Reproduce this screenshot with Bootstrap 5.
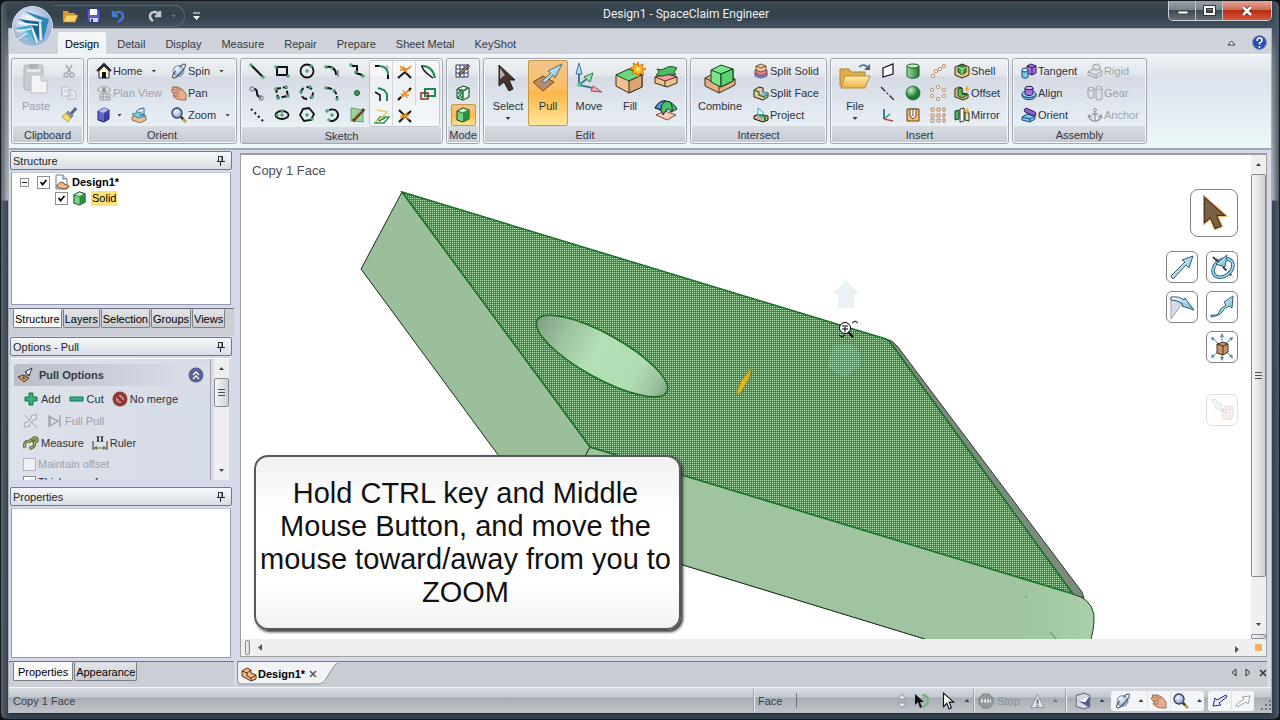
<!DOCTYPE html>
<html lang="en">
<head>
<meta charset="utf-8">
<meta name="viewport" content="width=device-width, initial-scale=1">
<title>Design1 - SpaceClaim Engineer</title>
<link href="https://cdn.jsdelivr.net/npm/bootstrap@5.3.0/dist/css/bootstrap.min.css" rel="stylesheet">
<script src="https://cdn.jsdelivr.net/npm/bootstrap@5.3.0/dist/js/bootstrap.bundle.min.js"></script>
<style>
body{font:11px/14px "Liberation Sans",Arial,sans-serif;color:#2b323c;background:#101418}
button{border:0;background:none;padding:0;color:inherit;font:inherit;flex-shrink:0}
svg{display:block;flex-shrink:0}
.ic{width:16px;height:16px}
.big{width:32px;height:32px}
.win{padding:0 7px 5px;min-height:100vh;height:100vh;border:1px solid #14191e;border-radius:7px;
 background:linear-gradient(90deg,#59636b,transparent 7px,transparent calc(100% - 7px),#4b5868) ,linear-gradient(#3b4852 0,#33414c 14px,#465663 29px,#7d8488 60px,#b4b8bc 199px,#39434f 200px,#333f4c)}
.titlebar{height:27px;color:#eef2f5;font:12px/14px Roboto,sans-serif}
.qat{height:22px;margin-left:46px;border:1px solid #59656f;border-left:0;border-radius:0 12px 12px 0;padding:0 8px 0 8px}
.orb{left:11px;top:5px;width:41px;height:41px;z-index:5}
.wbtns{border:1px solid #cdd3d8;border-top:0;border-radius:0 0 5px 5px;overflow:hidden;height:20px}
.wbtns button{width:27px;background:linear-gradient(#9aa2a8 0,#76828b 48%,#3d4852 50%,#667079);border-right:1px solid #c0c6cb}
.wbtns .closer{width:48px;border:0;background:linear-gradient(#e3a79b 0,#cf6a56 48%,#b52c14 50%,#d8573a)}
.inner{background:#d5d9ea;border:1px solid #aab0b8;border-bottom-color:#20262c;min-height:0}
.menus{height:25px;background:#cfd3dc;padding-left:49px}
.menus .nav-link{font-size:11px;line-height:14px;padding:4px 10px 4px;color:#333a43;border-radius:3px 3px 0 0;border:1px solid transparent;border-bottom:0;margin-right:-2px}
.menus .nav-link.active{background:linear-gradient(#f4f7fa,#e9f2f5);padding:4px 6px 4px;border-color:#f6fafc;margin-right:0}
.ribbon{background:linear-gradient(#eef2f6,#dde3ec 24%,#e3ecf3 60%,#edf8fa);padding:3px 2px 4px;gap:3px;border-bottom:2px solid #a2a7b0;border-top:1px solid #f7f9fb}
.grp{border:1px solid #a1a6af;border-radius:3px;box-shadow:inset 0 0 0 1px #f5f8fb;background:linear-gradient(#eef1f4 0,#e2e6ec 17px,#d5dae4 18px,#e9f1f6 70px);height:86px;display:flex;flex-direction:column;flex-shrink:0}
.grp>.gbody{height:68px;padding-top:1px;display:flex}
.grp>.glabel{text-align:center;line-height:14px;height:16px;padding-top:2px;margin:0 1px 1px;background:linear-gradient(#d7dbe2,#c6cbd3);color:#30363f}
.col-b{display:flex;flex-direction:column}
.rb{height:22px;display:flex;align-items:center;gap:1px;white-space:nowrap}
.off{color:#9da1a8}
.tile{width:40px;height:66px;display:flex;flex-direction:column;align-items:center;padding-top:2px;line-height:14px}
.tile .big{margin-bottom:5px}
.tile.hot{padding-top:1px}
.caret{width:5px;height:3px;background:#3c424a;clip-path:polygon(0 0,100% 0,50% 100%);flex-shrink:0}
.caret.up{clip-path:polygon(0 100%,100% 100%,50% 0)}
.hot{background:linear-gradient(#f3c38b,#fbbf62 45%,#ffb444 48%,#ffe79a);border:1px solid #c39a4c;border-radius:2px}
.cells{display:grid;grid-auto-flow:column;grid-template-rows:repeat(3,22px);grid-auto-columns:25px}
.cells button{display:flex;align-items:center;justify-content:center}
.trim{border:1px solid #c3c7cd;border-radius:3px;background:rgba(255,255,255,.55);grid-auto-columns:23px}
.trim button:nth-child(n+4){box-shadow:-1px 0 #d3d7dd}
.side{width:225px;padding:0 2px 0 1px;margin-right:6px;min-height:0}
.phead{height:19px;border:1px solid #6f7a90;border-radius:2px;background:linear-gradient(#f6f8fa,#d9dee6);padding:0 5px 0 2px;color:#20252c;flex-shrink:0;margin:1px 0 2px;font-weight:400}
.pbox{background:#fff;border:1px solid #8f98ac;border-top-color:#c3c9d8;margin:0 1px}
.tabs{background:#cbced5;border-top:1px solid #6d7380;gap:1px;padding-left:4px;flex-shrink:0;margin:3px -2px 0 -1px;color:#000}
.tabs button{border:1px solid #7b8088;border-top-color:#d9dce0;background:linear-gradient(#e2e4e7,#c9cbd0);padding:0 1px;height:19px;line-height:16px;border-radius:0 0 2px 2px;color:#000}
.tabs button.active{background:#fbfbfc;border-top-color:#fbfbfc}
.form-check-input[type=checkbox]{width:13px;height:13px;border-radius:0;margin:0;border:1px solid #8b8f95;background-color:#fff;flex-shrink:0}
.form-check-input:checked[type=checkbox]{background-image:url("data:image/svg+xml,%3Csvg xmlns='http://www.w3.org/2000/svg' viewBox='0 0 13 13'%3E%3Cpath d='M3 6l2.500 3 4.500-5.500' fill='none' stroke='%23000' stroke-width='2'/%3E%3C/svg%3E")}
.opts{height:122px;overflow:hidden;background:linear-gradient(90deg,#dde1e9,#d5dbe8);margin:0 1px;padding-right:2px;border-top:1px solid #fff}
.opts .ohead{background:linear-gradient(90deg,#b9bec8,#dde0ea);height:22px;border-radius:4px 4px 0 0;margin:5px 0 2px 3px;padding:0 6px 0 3px}
.opts .rb{padding-left:12px;gap:2px}
.opts .obody{border-right:1px solid #9ca2ae;margin-right:3px}
.sbar{background:#efeff0;width:15px}
.thumb{border:1px solid #878b90;border-radius:2px;background:linear-gradient(90deg,#f7f7f8,#cfd0d4);display:flex;align-items:center;justify-content:center}
.gripv{width:7px;height:8px;background:repeating-linear-gradient(#4c5056 0,#4c5056 1px,transparent 1px,transparent 3px)}
.view{border:1px solid #9d9f98;border-width:2px 1px 1px;background:#fff;min-height:0;min-width:0}
.prompt{left:11px;top:8px;font-size:13px;line-height:16px;color:#4c4f52}
.hint{left:13px;bottom:9px;width:427px;border:2px solid #55585c;border-radius:14px;background:linear-gradient(#f0f0f1,#fff 30%,#fff 75%,#f1f1f2);box-shadow:2px 2px 3px #333;font-size:29px;line-height:33px;color:#111;text-align:center;padding:20px 4px 19px 0}
.tools{right:13px;top:34px;display:grid;grid-template-columns:32px 32px;gap:8px;justify-items:end}
.tools button{width:32px;height:32px;border:1px solid #7f8388;border-radius:6px;background:#fff;display:flex;align-items:center;justify-content:center}
.tools .pick{width:48px;height:48px;grid-column:1/3;margin-bottom:6px;border-radius:8px}
.tools svg{width:28px;height:28px}
.doctabs{background:#c8ccd3;border-top:1px solid #737987;height:26px;color:#000;margin-left:-3px}
.doctab{width:100px;height:23px}
.doctab span{font-weight:700}
.status{height:26px;background:linear-gradient(#d9dce2,#c3c7ce 35%,#a9aeb6 40%,#c0c4ca);border-top:1px solid #f2f4f6;color:#3b4149}
.status button{height:22px;display:flex;align-items:center;justify-content:center}
.sep{width:2px;height:24px;border-left:1px solid #9a9fa7;border-right:1px solid #e9ebee}
.wgrp{background:#f3f5f8;border-radius:3px;height:20px;display:flex;align-items:center}
</style>
</head>
<body>
<svg width="0" height="0" class="position-absolute" aria-hidden="true">
<defs>
<linearGradient id="gB" x1="0" y1="0" x2="1" y2="1"><stop offset="0" stop-color="#fff"/><stop offset="1" stop-color="#5db4d0"/></linearGradient>
<linearGradient id="gY" x1="0" y1="0" x2="0" y2="1"><stop offset="0" stop-color="#fff0b0"/><stop offset="1" stop-color="#e8b040"/></linearGradient>
<linearGradient id="gC" x1="0" x2="1"><stop offset="0" stop-color="#9fdca4"/><stop offset="1" stop-color="#237a35"/></linearGradient>
<radialGradient id="gS" cx=".35" cy=".3"><stop offset="0" stop-color="#c8f0c8"/><stop offset="1" stop-color="#1d7a34"/></radialGradient>
<radialGradient id="gL" cx=".4" cy=".35"><stop offset="0" stop-color="#f4f8ff"/><stop offset="1" stop-color="#9fb5d8"/></radialGradient>
</defs>
<symbol id="folder" viewBox="0 0 16 16"><path d="M1 3h5l1 2h6v3H4l-3 6z" fill="#d89a28"/><path d="M4 7h12l-3 7H1z" fill="#f7cf63" stroke="#b97f1c" stroke-width=".6"/></symbol>
<symbol id="save" viewBox="0 0 16 16"><path d="M1 1h13v13H3l-2-2z" fill="#5c5ac8" stroke="#2c2c8a"/><path d="M4 1h7v6H4z" fill="#fff"/><path d="M4 10h8v4H4z" fill="#d4d6ea"/><path d="M5 11h2v3H5z" fill="#30308e"/></symbol>
<symbol id="undo" viewBox="0 0 16 16"><path d="M3 3v5h5M4 7c3-5 9-3 9 1 0 3-3 5-5 6" fill="none" stroke="#4179d6" stroke-width="2.500"/></symbol>
<symbol id="redo" viewBox="0 0 16 16"><path d="M13 3v5H8M12 7C9 2 3 4 3 8c0 2 1 4 3 5" fill="none" stroke="#c3cad1" stroke-width="2.500"/></symbol>
<symbol id="cut" viewBox="0 0 16 16"><path d="M5 2l5 8M11 2L6 10" stroke="#a9adb4" stroke-width="1.500"/><circle cx="5" cy="12" r="2" fill="none" stroke="#a9adb4" stroke-width="1.500"/><circle cx="11" cy="12" r="2" fill="none" stroke="#a9adb4" stroke-width="1.500"/></symbol>
<symbol id="copy" viewBox="0 0 16 16"><path d="M1 2h6l2 2v7H1zM7 5h5l3 3v6H7z" fill="#edeff2" stroke="#b4b8be"/><path d="M3 5h3M3 7h3M9 9h3M9 11h4" stroke="#c2c5ca"/></symbol>
<symbol id="brush" viewBox="0 0 16 16"><path d="M15 1l-5 6" stroke="#5c6488" stroke-width="3"/><path d="M7 4l5 5-2 2-5-4z" fill="#8e93aa" stroke="#4b4f6c" stroke-width=".6"/><path d="M5 6l5 5-3 4-6-5z" fill="#f3dd66" stroke="#99812a" stroke-width=".7"/></symbol>
<symbol id="paste" viewBox="0 0 32 32"><rect x="4" y="3" width="19" height="25" rx="2" fill="#c9ccd1" stroke="#b0b3b8"/><path d="M9 2h9v5H9z" fill="#b1b4b9"/><path d="M7 7h13v3H7z" fill="#e5e7e9"/><path d="M11 13h10l6 6v12H11z" fill="#f3f4f6" stroke="#bcc0c5"/><path d="M21 13v6h6" fill="#dcdee2" stroke="#bcc0c5"/></symbol>
<symbol id="home" viewBox="0 0 16 16"><path d="M3 8v7h10V8L8 3z" fill="#fff7cf" stroke="#2d2a3a"/><path d="M1 8l7-7 7 7" fill="none" stroke="#1c1c30" stroke-width="2"/><path d="M6 9h4v6H6z" fill="#111"/></symbol>
<symbol id="plan" viewBox="0 0 16 16"><path d="M1 5q7-7 14 0-7 5-14 0z" fill="#dfe1e4" stroke="#999da3"/><circle cx="8" cy="5" r="2" fill="#888c93"/><path d="M4 9h10v6H4zM4 12h10M7 9v6M11 9v6" fill="none" stroke="#999da3"/></symbol>
<symbol id="bcube" viewBox="0 0 16 16"><path d="M2 4l6-3 5 2v9l-5 3-6-2z" fill="#6167c4" stroke="#1d1f5a"/><path d="M2 4l6-3 5 2-5 3z" fill="#b6baf0"/><path d="M8 6l5-3v9l-5 3z" fill="#3b3f9c"/></symbol>
<symbol id="turn" viewBox="0 0 16 16"><path d="M1 10l5-2 9 2v3l-6 3-8-3z" fill="#e9bf98" stroke="#7b5432" stroke-width=".8"/><path d="M1 7l8-2 6 4-8 2z" fill="#7fd2e6" stroke="#28708c" stroke-width=".8"/><path d="M8 2l5-1v7H8M8 2L5 5" fill="none" stroke="#29659a"/></symbol>
<symbol id="spin" viewBox="0 0 16 16"><circle cx="7.500" cy="8" r="5.500" fill="url(#gL)" stroke="#8795b5"/><ellipse cx="8" cy="8" rx="9" ry="2.500" transform="rotate(-48 8 8)" fill="none" stroke="#3c4252"/><path d="M4 6Q6 3 9 4L5 9z" fill="#e9f0fb"/></symbol>
<symbol id="hand" viewBox="0 0 16 16"><path d="M0 5l2-1-1-2 4 0 2 0 5 3 3 4v6l-4 0-5-1-3-2-1-2 2 0-3-3z" fill="#e8ae8d" stroke="#8c563b" stroke-width=".8"/><path d="M2 4l6 3M2 7l6 2M4 2l6 4M4 11l4 0" stroke="#9a6145" stroke-width=".8"/></symbol>
<symbol id="zoomi" viewBox="0 0 16 16"><path d="M10 10l5 5" stroke="#b7a047" stroke-width="3"/><path d="M10 10l2 2" stroke="#223" stroke-width="2"/><circle cx="6" cy="6" r="5" fill="url(#gL)" stroke="#2e3a66" stroke-width="1.300"/></symbol>
<symbol id="k1" viewBox="0 0 16 16"><path d="M3 3l10 10" fill="none" stroke="#111" stroke-width="2"/><path d="M1 1h2v2H1zM13 13h2v2h-2z" fill="#fff" stroke="#1d8a50"/></symbol>
<symbol id="k2" viewBox="0 0 16 16"><path d="M3 4h10v8H3z" fill="none" stroke="#111" stroke-width="2"/><path d="M1 3h2v2H1zM13 12h2v2h-2z" fill="#fff" stroke="#1d8a50"/></symbol>
<symbol id="k3" viewBox="0 0 16 16"><circle cx="8" cy="8" r="6.500" fill="none" stroke="#111" stroke-width="1.800"/><path d="M7 7h2v2H7zM11 2h2v2h-2z" fill="#fff" stroke="#1d8a50"/></symbol>
<symbol id="k4" viewBox="0 0 16 16"><path d="M3 4c5-1 9 2 9 8" fill="none" stroke="#111" stroke-width="2"/><path d="M14 7v7" stroke="#9297a0" stroke-width="2"/><path d="M1 3h2v2H1zM7 4h2v2H7z" fill="#fff" stroke="#1d8a50"/></symbol>
<symbol id="k5" viewBox="0 0 16 16"><path d="M3 3h5v4l-1 3 6 2" fill="none" stroke="#111" stroke-width="2"/><path d="M1 1h2v2H1zM6 8h2v2H6zM13 12h2v2h-2z" fill="#fff" stroke="#1d8a50"/></symbol>
<symbol id="k6" viewBox="0 0 16 16"><path d="M5 4q3 0 3 4t4 4" fill="none" stroke="#111" stroke-width="2"/><circle cx="3" cy="4" r="2" fill="none" stroke="#888c92" stroke-width="1.300"/><circle cx="12" cy="13" r="2" fill="none" stroke="#888c92" stroke-width="1.300"/></symbol>
<symbol id="k7" viewBox="0 0 16 16"><path d="M2 4l10-2 2 9-10 2z" fill="none" stroke="#111" stroke-width="2" stroke-dasharray="5 2"/><path d="M1 3h2v2H1zM11 1h2v2h-2zM13 10h2v2h-2zM3 12h2v2H3z" fill="#fff" stroke="#1d8a50"/></symbol>
<symbol id="k8" viewBox="0 0 16 16"><circle cx="8" cy="8" r="6" fill="none" stroke="#111" stroke-width="1.800" stroke-dasharray="6 3"/><path d="M10 1h2v2h-2zM1 6h2v2H1zM12 11h2v2h-2z" fill="#fff" stroke="#1d8a50"/></symbol>
<symbol id="k9" viewBox="0 0 16 16"><path d="M3 3c6 0 10 4 10 10" fill="none" stroke="#111" stroke-width="2" stroke-dasharray="5 2"/><path d="M1 2h2v2H1zM9 5h2v2H9zM12 13h2v2h-2z" fill="#fff" stroke="#1d8a50"/></symbol>
<symbol id="k10" viewBox="0 0 16 16"><circle cx="8" cy="8" r="2.500" fill="#3a9a5c" stroke="#155c33"/></symbol>
<symbol id="k11" viewBox="0 0 16 16"><path d="M2 2l13 13" stroke="#111" stroke-width="2" stroke-dasharray="2 3"/></symbol>
<symbol id="k12" viewBox="0 0 16 16"><ellipse cx="8" cy="8" rx="6.500" ry="4" fill="none" stroke="#111" stroke-width="1.800"/><path d="M7 7h2v2H7zM7 3h2v2H7zM2 7h2v2H2z" fill="#fff" stroke="#1d8a50"/></symbol>
<symbol id="k13" viewBox="0 0 16 16"><path d="M4 2l6-1 5 6-3 6-7 1-4-6z" fill="none" stroke="#111" stroke-width="1.800"/><path d="M7 7h2v2H7zM12 11h2v2h-2z" fill="#fff" stroke="#1d8a50"/></symbol>
<symbol id="k14" viewBox="0 0 16 16"><path d="M5 3c9-3 13 8 4 11l-3 0" fill="none" stroke="#111" stroke-width="2"/><path d="M2 3h2v2H2zM7 7h2v2H7zM4 12h2v2H4z" fill="#fff" stroke="#1d8a50"/></symbol>
<symbol id="k15" viewBox="0 0 16 16"><path d="M2 1l12 2v12L2 14z" fill="#9fd39c" stroke="#568f56" stroke-width=".8"/><path d="M4 14L15 2" stroke="#4d3a26" stroke-width="3"/><path d="M5 12l8-9" stroke="#d6b25c"/></symbol>
<symbol id="t1" viewBox="0 0 16 16"><path d="M1 2h5M14 11v4" stroke="#111" stroke-width="2"/><path d="M5 2c6 0 9 3 9 9" fill="none" stroke="#1c8a4c" stroke-width="2"/><path d="M11 2h3v3" stroke="#c59a9a" fill="none"/></symbol>
<symbol id="t2" viewBox="0 0 16 16"><path d="M4 2l6 2 3 4v7" fill="none" stroke="#1c8a4c" stroke-width="2"/><path d="M1 6l5 3v6" fill="none" stroke="#111" stroke-width="1.600"/></symbol>
<symbol id="t3" viewBox="0 0 16 16"><path d="M6 9h9l-5 6H1z" fill="none" stroke="#259a52" stroke-width="1.500"/><path d="M3 2l10 2-8 8-4 2" fill="none" stroke="#e0d35a" stroke-width="1.500"/><path d="M5 13l6-3" stroke="#111"/></symbol>
<symbol id="t4" viewBox="0 0 16 16"><path d="M1 14l7-6 6 6" fill="none" stroke="#111" stroke-width="2"/><path d="M3 2l5 5 6-5M3 6l10-2M6 2l4 7" fill="none" stroke="#e88a25" stroke-width="1.500"/></symbol>
<symbol id="t5" viewBox="0 0 16 16"><path d="M1 14L14 2" stroke="#c8742b" stroke-width="1.500"/><path d="M4 8l8 1M6 4l4 8M3 11l4-1M10 5l4 0" stroke="#e79332" stroke-width="1.500"/><path d="M1 14l3-3M12 4l2-2" stroke="#111" stroke-width="2"/></symbol>
<symbol id="t6" viewBox="0 0 16 16"><path d="M2 2l12 12M2 14L14 3" stroke="#111" stroke-width="2"/><path d="M4 6l8 5M10 4l-4 8M3 9l9-2" stroke="#e79332" stroke-width="1.500"/></symbol>
<symbol id="t7" viewBox="0 0 16 16"><path d="M1 2c8-1 13 5 14 12" fill="none" stroke="#1c8a4c" stroke-width="2"/><path d="M2 2c0 5 7 9 11 12" fill="none" stroke="#111" stroke-width="1.500"/></symbol>
<symbol id="t8" viewBox="0 0 16 16"><path d="M5 3h10v7H5z" fill="none" stroke="#1c8a4c" stroke-width="2"/><path d="M1 7h7v6H1z" fill="none" stroke="#8d2b2b" stroke-width="1.500"/></symbol>
<symbol id="m1" viewBox="0 0 16 16"><path d="M1 2h12v12H1zM5 2v12M9 2v12M1 6h12M1 10h12" fill="#fff" stroke="#2e3466"/><path d="M4 12L14 2" stroke="#55412c" stroke-width="3"/><path d="M5 11l8-8" stroke="#e7b94a"/></symbol>
<symbol id="m2" viewBox="0 0 16 16"><path d="M2 4l6-3 6 2v9l-6 3-6-2z" fill="#e9f4ea" stroke="#14301c"/><path d="M3 9l4-5M3 13l5-7M6 13l2-3M2 4l6 2v9M8 6l5-3" fill="none" stroke="#1f7a3c" stroke-width="1.500"/></symbol>
<symbol id="gcube" viewBox="0 0 16 16"><path d="M2 4l6-3 6 2v9l-6 3-6-2z" fill="#77d487" stroke="#10401c"/><path d="M2 4l6-3 6 2-6 3z" fill="#c2f3c4" stroke="#10401c" stroke-width=".7"/><path d="M8 6l6-3v9l-6 3z" fill="#2e8b46"/></symbol>
<symbol id="ptr" viewBox="0 0 32 32"><path d="M7 3v21l5-4 5 9 4-2-4-9h6z" fill="#46342f" stroke="#241a17"/><path d="M8 6v11l5-4z" fill="#b7aaa6"/></symbol>
<symbol id="pull" viewBox="0 0 32 32"><path d="M1 20l10-6 11 6-11 9z" fill="#b98c66" stroke="#704a2c"/><path d="M10 19l9-8-3-2 14-7-7 14-2-3-8 8z" fill="url(#gB)" stroke="#46727c"/></symbol>
<symbol id="move" viewBox="0 0 32 32"><path d="M6 23V9M6 23l9-7M6 23l14 3" stroke="#3e7d92" stroke-width="2"/><path d="M6 1L3 12h6z" fill="#aee4f5" stroke="#3e6d92"/><path d="M20 11l-3 9-6-5z" fill="#9ee0a8" stroke="#2a7d46"/><path d="M29 30l-11-1 2-5z" fill="#f5a9a9" stroke="#a24e56"/><circle cx="6" cy="23" r="2" fill="#5c9"/></symbol>
<symbol id="fill" viewBox="0 0 32 32"><path d="M2 13l13-6 13 6v12l-13 6-13-7z" fill="#efc294" stroke="#3e2b1a"/><path d="M2 13l13-6 13 6-13 6z" fill="#6ed780" stroke="#1d5229"/><path d="M15 19v12l13-6V13z" fill="#dba575" stroke="#3e2b1a"/><path d="M24 0l1 4 4-2-1 4 4 1-4 2 2 4-4-2-2 4-2-4-4 1 2-4-4-2 4-1-1-4 4 2z" fill="#ffb321" stroke="#d8720c"/><circle cx="24" cy="7" r="2" fill="#ffe87d"/></symbol>
<symbol id="rep" viewBox="0 0 24 22"><path d="M1 11l12-3 10 3v6l-10 4-12-4z" fill="#efc294" stroke="#3e2b1a"/><path d="M1 11l12-3 10 3-12 4z" fill="#ee9ea2" stroke="#64302a"/><path d="M11 15v6" stroke="#3e2b1a"/><path d="M3 3q5 2 9-1t11 0l-3 4 2 3q-5-2-9 0T2 9l3-3z" fill="#4dbd68" stroke="#174f27"/></symbol>
<symbol id="blend" viewBox="0 0 24 22"><path d="M2 16l9-4 11 4-9 5z" fill="#f9cdb4" stroke="#8b4635"/><path d="M1 9Q5 1 12 2t11 8l-6 3q-2-4-4-3l-4 6q0-5-8-7z" fill="#45c26a" stroke="#12232b"/><path d="M1 9Q5 1 12 2 7 4 7 11 4 9 1 9z" fill="#5896cf" stroke="#12232b"/><path d="M15 2q4 3 3 10" stroke="#12232b" fill="none"/></symbol>
<symbol id="combine" viewBox="0 0 32 32"><path d="M1 16l8-4 22 5v6l-16 8-14-7z" fill="#e3b182" stroke="#3e2b1a"/><path d="M1 16l14 7v8M15 23l16-6" fill="none" stroke="#3e2b1a"/><path d="M7 8l10-5 12 4v12l-12 6-10-5z" fill="#7be58d" stroke="#153f1e"/><path d="M7 8l10 4 12-5M17 12v13" fill="none" stroke="#153f1e"/><path d="M17 12l12-5v12l-12 6z" fill="#5dd072" stroke="#153f1e"/></symbol>
<symbol id="s1" viewBox="0 0 16 16"><path d="M2 10l6-2 6 2v3l-6 2-6-2z" fill="#7f92dd" stroke="#34406f" stroke-width=".8"/><path d="M2 7l6-1 6 1v3l-6 3-6-3z" fill="#e77f87" stroke="#72343c" stroke-width=".8"/><path d="M3 3l5-2 5 2v4L8 9 3 7z" fill="#efc79e" stroke="#5b3b22" stroke-width=".8"/><path d="M3 3l5 2 5-2" fill="none" stroke="#5b3b22" stroke-width=".8"/></symbol>
<symbol id="s2" viewBox="0 0 16 16"><path d="M1 5l5-3 4 1v4l5 1v4l-5 3-9-3z" fill="#efc79e" stroke="#2b1f14"/><path d="M1 5l5 2v3l5 2 4-4" fill="none" stroke="#1f8b40" stroke-width="1.500"/><path d="M8 8l3-1 4 1-4 3z" fill="#72b8ef"/></symbol>
<symbol id="s3" viewBox="0 0 16 16"><path d="M1 9l5-2 9 2v4l-5 2-9-3z" fill="#cdaf93" stroke="#1b1512"/><path d="M5 1l5 4v6l-5-3z" fill="#e6fbff" stroke="#3ca6b9"/><path d="M6 8l6 1v5" fill="none" stroke="#1f8b40" stroke-width="2"/></symbol>
<symbol id="file" viewBox="0 0 32 32"><path d="M1 7h9l2 3h14v14H1z" fill="#dfab4b" stroke="#b28332"/><path d="M6 14h25l-5 12H2z" fill="url(#gY)" stroke="#b98c38"/><path d="M20 5q5-4 8 0" fill="none" stroke="#3d6894" stroke-width="1.500"/><path d="M31 2v6h-6z" fill="#3d6894"/></symbol>
<symbol id="i1" viewBox="0 0 16 16"><path d="M3 5l10-4v10L3 14z" fill="#fff" stroke="#111" stroke-width="1.200"/></symbol>
<symbol id="i2" viewBox="0 0 16 16"><path d="M1 2l13 13" stroke="#222" stroke-width="1.200" stroke-dasharray="6 2 2 2"/></symbol>
<symbol id="i3" viewBox="0 0 16 16"><path d="M4 2v10" stroke="#3381ad" stroke-width="2"/><path d="M4 12l6-5" stroke="#3a9c50" stroke-width="1.500"/><path d="M4 12l9 2" stroke="#b94848" stroke-width="1.500"/></symbol>
<symbol id="i4" viewBox="0 0 16 16"><path d="M2 3v10c2 3 10 3 12 0V3z" fill="url(#gC)" stroke="#1c5a2b"/><ellipse cx="8" cy="3" rx="6" ry="2" fill="#c6ecc6" stroke="#1c5a2b"/></symbol>
<symbol id="i5" viewBox="0 0 16 16"><circle cx="8" cy="8" r="7" fill="url(#gS)" stroke="#18562a" stroke-width=".7"/></symbol>
<symbol id="i6" viewBox="0 0 16 16"><path d="M2 2h12v12H2z" fill="#f4bd7c" stroke="#6a3e16"/><path d="M5 2v7l3 3 3-3V2z" fill="#fff" stroke="#6a3e16"/><path d="M8 2v7" stroke="#6a3e16"/></symbol>
<symbol id="i7" viewBox="0 0 16 16"><g fill="#fff" stroke="#c28a5c"><circle cx="3" cy="13" r="1.700"/><circle cx="6" cy="8" r="1.700"/><circle cx="10" cy="6" r="1.700"/><circle cx="14" cy="3" r="1.700"/></g></symbol>
<symbol id="i8" viewBox="0 0 16 16"><g fill="#fff" stroke="#c28a5c"><circle cx="8" cy="2" r="1.600"/><circle cx="2" cy="5" r="1.600"/><circle cx="14" cy="5" r="1.600"/><circle cx="2" cy="11" r="1.600"/><circle cx="14" cy="11" r="1.600"/><circle cx="8" cy="14" r="1.600"/></g></symbol>
<symbol id="i9" viewBox="0 0 16 16"><g fill="#fff" stroke="#b87f50"><path d="M1 1h3v3H1zM7 1h3v3H7zM13 1h2v3h-2zM1 7h3v3H1zM7 7h3v3H7zM13 7h2v3h-2zM1 12h3v3H1zM7 12h3v3H7zM13 12h2v3h-2z"/></g></symbol>
<symbol id="shell" viewBox="0 0 16 16"><path d="M1 4l7-3 7 3v8l-7 3-7-3z" fill="#eec48d" stroke="#33240f"/><path d="M4 4l4-2 4 2v5l-4 3-4-3z" fill="#34a748" stroke="#114a1e"/><path d="M8 6v6M4 4l4 2 4-2" stroke="#b9f09a" fill="none"/></symbol>
<symbol id="offs" viewBox="0 0 16 16"><path d="M1 4l4-2 3 1v5l6 1v4l-5 2-8-3z" fill="#e5c98d" stroke="#33240f"/><path d="M4 4l4-1v6l5 1-4 3-5-2z" fill="#65bb59" stroke="#114a1e"/><path d="M13 0l1 3 2 1-2 1-1 3-1-3-2-1 2-1z" fill="#ffa81f"/></symbol>
<symbol id="mirr" viewBox="0 0 16 16"><path d="M1 4l4-1v9l-4 1z" fill="#56b062" stroke="#114a1e"/><path d="M6 2l4-1v13l-4 1z" fill="#fff" stroke="#333"/><path d="M11 5l4 1v8l-4-1z" fill="#d6eec8" stroke="#33240f"/><path d="M13 0l1 3 2 1-2 1-1 3-1-3-2-1 2-1z" fill="#ffa81f"/></symbol>
<symbol id="a1" viewBox="0 0 16 16"><path d="M6 3l4-2 5 2v7l-4 2-5-2z" fill="#a274dd" stroke="#30195c"/><path d="M6 3l5 2 4-2M11 5v7" fill="none" stroke="#30195c"/><path d="M1 7v7c2 2 6 1 6 0V7z" fill="#7bc5ef" stroke="#184e78"/><ellipse cx="4" cy="7" rx="3" ry="2" fill="#c9ebfb" stroke="#184e78"/></symbol>
<symbol id="a2" viewBox="0 0 16 16"><path d="M1 9v2c2 5 12 5 14 0V9z" fill="#6aa9df" stroke="#184e78"/><ellipse cx="8" cy="9" rx="7" ry="3.500" fill="#a4d5f5" stroke="#184e78"/><path d="M4 3v6c2 2 6 2 8 0V3z" fill="#a274dd" stroke="#30195c"/><ellipse cx="8" cy="3" rx="4" ry="1.700" fill="#d4bdf5" stroke="#30195c"/></symbol>
<symbol id="a3" viewBox="0 0 16 16"><path d="M1 10l5-3 8 2v3l-5 3-8-2z" fill="#7bc5ef" stroke="#184e78"/><path d="M1 10l8 2 5-3M9 12v3" fill="none" stroke="#184e78"/><path d="M5 1l9 4 1 3-2 1-9-4-1-2z" fill="#9161d6" stroke="#30195c"/></symbol>
<symbol id="a4" viewBox="0 0 16 16"><path d="M1 9l5-3V2l4-1 3 2v4l2 1v4l-6 3-8-3zM1 9l8 3v3M9 12l6-4M6 6l4 1 3-1" fill="#dcdfe3" stroke="#9ba0a7"/></symbol>
<symbol id="a5" viewBox="0 0 16 16"><path d="M1 4v8q3 3 6 0V4zM9 3v11q3 2 6 0V3z" fill="#dcdfe3" stroke="#9ba0a7"/><ellipse cx="4" cy="4" rx="3" ry="1.500" fill="#eee" stroke="#9ba0a7"/><ellipse cx="12" cy="3" rx="3" ry="1.500" fill="#eee" stroke="#9ba0a7"/></symbol>
<symbol id="a6" viewBox="0 0 16 16"><path d="M8 4v10M5 7h6M2 9q1 5 6 5t6-5M1 11l1-3 3 2M15 11l-1-3-3 2" fill="none" stroke="#979ca4" stroke-width="1.300"/><circle cx="8" cy="3" r="1.500" fill="none" stroke="#979ca4"/></symbol>
<symbol id="pin" viewBox="0 0 10 12"><path d="M2.500 1.500h4v5h-4zM6 1v6M1 6.500h8M4.500 7v4" fill="none" stroke="#1d2430"/></symbol>
<symbol id="part" viewBox="0 0 16 16"><path d="M1 5l5-3 4 2v3l5 2v4l-5 2-9-5z" fill="#f0b987" stroke="#5b3217"/><path d="M1 5l5 2v3l4 2 5-3M6 7l4-3M10 12v3" fill="none" stroke="#5b3217"/></symbol>
<symbol id="doc" viewBox="0 0 16 16"><path d="M2 1h7l4 4v10H2z" fill="#fff" stroke="#6d7691"/><path d="M9 1v4h4" fill="#dbe0ec" stroke="#6d7691"/><path d="M3 11l4-3 3 1v1l5 2v1l-5 2-7-2z" fill="#f0b987" stroke="#7c4922" stroke-width=".9"/></symbol>
<symbol id="pullb" viewBox="0 0 16 16"><path d="M1 10l5-2 6 3-5 4z" fill="#d99a6b" stroke="#5a3219"/><path d="M6 11l4-5-2-1 7-4-3 8-1-2-4 5z" fill="#fff" stroke="#333"/></symbol>
<symbol id="plus" viewBox="0 0 16 16"><path d="M6 2h4v4h4v4h-4v4H6v-4H2V6h4z" fill="#39ad7a" stroke="#157048"/></symbol>
<symbol id="minus" viewBox="0 0 16 16"><path d="M1 6h13v4H1z" fill="#39ad8a" stroke="#157058"/></symbol>
<symbol id="nom" viewBox="0 0 16 16"><circle cx="8" cy="8" r="7.500" fill="#983c38"/><circle cx="8" cy="8" r="4.500" fill="#d9a39b" stroke="#6d2320"/><path d="M4 4l8 8" stroke="#983030" stroke-width="2.500"/><path d="M6 11l5-6" stroke="#7a3434"/></symbol>
<symbol id="flat" viewBox="0 0 16 16"><path d="M1 14l1-5 2 1 5-6-1-1 6-2-1 6-2-1-5 6 1 1z" fill="#e3e6ea" stroke="#a4a8af"/><path d="M2 2l12 13" stroke="#a4a8af"/></symbol>
<symbol id="full" viewBox="0 0 16 16"><path d="M2 2v12M3 4l8 4-8 5zM13 2v12" fill="#dfe2e7" stroke="#a4a8af" stroke-width="1.500"/></symbol>
<symbol id="meas" viewBox="0 0 16 16"><path d="M2 13q-2-7 5-7l4-3q4-1 3 3l-3 1q2 4-3 6H6" fill="none" stroke="#4e6322" stroke-width="3"/><path d="M2 13q-2-7 5-7l4-3q4-1 3 3l-3 1q2 4-3 6H6" fill="none" stroke="#c9d08a" stroke-width="1"/></symbol>
<symbol id="rule" viewBox="0 0 16 16"><path d="M1 6v9M15 6v9M5 1l2 6M7 1L5 7M9 1l2 6M11 1L9 7" stroke="#333"/><path d="M1 13l4-2v1.500h6V11l4 2-4 2v-1.500H5V15z" fill="#6c7c26"/></symbol>
<symbol id="sel" viewBox="0 0 16 16"><path d="M1 1v11l3-3 2 6 2-1-2-5h4z" fill="#111"/><path d="M8 2q7 0 6 6-1 5-6 6" fill="none" stroke="#70b878" stroke-width="2"/><path d="M9 5h3l-1-4z" fill="#70b878"/></symbol>
<symbol id="cur" viewBox="0 0 16 16"><path d="M4 1v12l3-3 2 5 2-1-2-5h4z" fill="#fff" stroke="#111"/></symbol>
<symbol id="stop" viewBox="0 0 16 16"><path d="M5 1h6l4 4v6l-4 4H5l-4-4V5z" fill="#94989f" stroke="#7e838a"/><path d="M3 8h10" stroke="#e6e8eb" stroke-width="3" stroke-dasharray="2 1"/></symbol>
<symbol id="warn" viewBox="0 0 16 16"><path d="M8 1l7 14H1z" fill="#dfe1e5" stroke="#8a8f96"/><path d="M8 6v5M8 12v2" stroke="#777" stroke-width="2"/></symbol>
<symbol id="vw" viewBox="0 0 16 16"><path d="M2 3l7-2 5 2v10l-5 2-7-2z" fill="#d7dae0" stroke="#757a84"/><path d="M14 3L4 8l10 6z" fill="#545b91"/><path d="M14 3L4 8l6 1z" fill="#fff"/></symbol>
<symbol id="ar1" viewBox="0 0 16 16"><path d="M1 13l2-8 2 2 9-5 1 2-8 6 2 2z" fill="#e6e9ff" stroke="#1f2b78"/></symbol>
<symbol id="ar2" viewBox="0 0 16 16"><path d="M15 3l-2 8-2-2-9 5-1-2 8-6-2-2z" fill="#fff" stroke="#9b9fa6"/></symbol>
<symbol id="g1" viewBox="0 0 28 28"><path d="M3 23l14-14-3-2 11-4-4 12-3-3L5 26z" fill="url(#gB)" stroke="#305f77"/></symbol>
<symbol id="g2" viewBox="0 0 28 28"><path d="M5 4l20 20" stroke="#444" stroke-width="2" stroke-dasharray="5 2"/><ellipse cx="15" cy="15" rx="11" ry="8" transform="rotate(-38 15 15)" fill="none" stroke="#2c6a82" stroke-width="3.500"/><ellipse cx="15" cy="15" rx="11" ry="8" transform="rotate(-38 15 15)" fill="none" stroke="#a5dff0" stroke-width="1.500"/><path d="M8 6l5 5" stroke="#444" stroke-width="2"/><path d="M19 2l-2 12-9-3z" fill="url(#gB)" stroke="#305f77"/></symbol>
<symbol id="g3" viewBox="0 0 28 28"><path d="M3 4v22l11-15z" fill="#d5dae4" stroke="#a1a6b3"/><path d="M3 4q8-1 13 3l1-2 9 12-12-4 1-2Q9 7 3 7z" fill="url(#gB)" stroke="#305f77"/></symbol>
<symbol id="g4" viewBox="0 0 28 28"><path d="M3 22q7 1 8-3t7-7l-2-3 9-6-1 12-3-2q-6 3-7 6t-11 5z" fill="url(#gB)" stroke="#305f77"/></symbol>
<symbol id="g5" viewBox="0 0 28 28"><path d="M4 5l6 5M24 5l-6 5M4 24l6-5M24 24l-6-5M14 1v7M14 20v7" stroke="#4b91aa"/><path d="M3 4l4 1-3 3zM25 4l-4 1 3 3zM3 25l4-1-3-3zM25 25l-4-1 3-3zM12 4h4l-2-4zM12 24h4l-2 4z" fill="#4b91aa"/><path d="M9 11l6-2 5 2v8l-5 3-6-2z" fill="#c89368" stroke="#4a2e1a"/><path d="M9 11l6 2 5-2M15 13v9" fill="none" stroke="#4a2e1a"/></symbol>
<symbol id="g6" viewBox="0 0 28 28"><path d="M3 4l4-1 4 5 2-1 2 9-8-4 1-2z" fill="#c8e3ee" stroke="#6795a5"/><path d="M15 13l3-3 7 1v10l-3 3-7-1z" fill="#ecd0bb" stroke="#9b7a64"/><path d="M15 13l7 1 3-3M22 14v10" fill="none" stroke="#9b7a64"/><path d="M13 13l6 5" stroke="#6795a5" stroke-width="2"/></symbol>
</svg>

<div class="win d-flex flex-column position-relative">
  <button class="orb position-absolute" aria-label="Application menu">
    <svg viewBox="0 0 41 41" width="41" height="41"><circle cx="20.500" cy="20.500" r="20" fill="url(#gL)" stroke="#dce4ee"/><path d="M12 5l25 8-6 22-2-20z" fill="#2e86b4"/><path d="M6 13l23 3-2 0 0 19-7-15z" fill="#1b648f"/><path d="M3 22l16-3 5 19-8-12z" fill="#4aa6cb"/><path d="M5 32l10-7 7 13-8-7z" fill="#66b8d8"/><path d="M10 9l20 6M6 17l20 2M5 25l14-2M6 33l9-6M28 17l1 17M20 22l5 15" stroke="#eef5fb" stroke-width="1.500"/></svg>
  </button>

  <header class="titlebar d-flex align-items-start justify-content-between position-relative">
    <div class="d-flex align-items-center mt-1 gap-2">
      <div class="qat d-flex align-items-center">
        <button aria-label="Open"><svg class="ic"><use href="#folder"/></svg></button>
        <button class="ms-2" aria-label="Save"><svg class="ic"><use href="#save"/></svg></button>
        <button class="ms-2 d-flex align-items-center gap-2" aria-label="Undo"><svg class="ic"><use href="#undo"/></svg><i class="caret"></i></button>
        <button class="ms-2 d-flex align-items-center gap-2" aria-label="Redo"><svg class="ic"><use href="#redo"/></svg><i class="caret bg-secondary"></i></button>
      </div>
      <button aria-label="Customize toolbar"><svg width="7" height="8"><path d="M0 1h7" stroke="#fff" stroke-width="1"/><path d="M0 4h7L3.500 8z" fill="#fff"/></svg></button>
    </div>
    <div class="position-absolute start-50 translate-middle-x text-nowrap" style="top:6px;margin-left:46px">Design1 - SpaceClaim Engineer</div>
    <div class="wbtns d-flex">
      <button aria-label="Minimize"><svg width="26" height="19"><path d="M9 10h10v3H9z" fill="#fff" stroke="#444"/></svg></button>
      <button aria-label="Maximize"><svg width="26" height="19"><path d="M9 6h9v7H9z" fill="none" stroke="#333" stroke-width="4"/><path d="M9 6h9v7H9z" fill="none" stroke="#fff" stroke-width="2"/></svg></button>
      <button class="closer" aria-label="Close"><svg width="48" height="19"><path d="M20 6l8 8M28 6l-8 8" stroke="#5a2a22" stroke-width="4"/><path d="M20 6l8 8M28 6l-8 8" stroke="#fff" stroke-width="2.500"/></svg></button>
    </div>
  </header>

  <div class="inner d-flex flex-column flex-grow-1">
    <nav class="menus d-flex align-items-end justify-content-between flex-shrink-0">
      <div class="nav nav-tabs border-0 flex-nowrap">
        <a class="nav-link active" href="#">Design</a><a class="nav-link" href="#">Detail</a><a class="nav-link" href="#">Display</a><a class="nav-link" href="#">Measure</a><a class="nav-link" href="#">Repair</a><a class="nav-link" href="#">Prepare</a><a class="nav-link" href="#">Sheet Metal</a><a class="nav-link" href="#">KeyShot</a>
      </div>
      <div class="d-flex align-items-center gap-3 pb-1 pe-1">
        <button aria-label="Collapse ribbon"><svg width="9" height="6"><path d="M1 5l3.500-4L8 5z" fill="#fff" stroke="#333"/></svg></button>
        <button aria-label="Help"><svg width="15" height="15"><circle cx="7.500" cy="7.500" r="7" fill="#2750b4" stroke="#8e9ab8"/><path d="M5 6q0-3 2.500-3T10 5.500Q10 7 7.500 8v1.500M7.500 11v2" fill="none" stroke="#fff" stroke-width="1.600"/></svg></button>
      </div>
    </nav>

    <div class="ribbon d-flex flex-shrink-0">
      <section class="grp" style="width:73px"><div class="gbody">
        <button class="tile off ms-1"><svg class="big"><use href="#paste"/></svg>Paste</button>
        <div class="cells"><button aria-label="Cut"><svg class="ic"><use href="#cut"/></svg></button><button aria-label="Copy"><svg class="ic"><use href="#copy"/></svg></button><button aria-label="Format painter"><svg class="ic"><use href="#brush"/></svg></button></div>
      </div><div class="glabel">Clipboard</div></section>

      <section class="grp" style="width:150px"><div class="gbody ps-2">
        <div class="col-b" style="width:75px">
          <button class="rb"><svg class="ic"><use href="#home"/></svg>Home<i class="caret ms-2"></i></button>
          <button class="rb off"><svg class="ic"><use href="#plan"/></svg>Plan View</button>
          <div class="rb"><button class="rb" aria-label="View"><svg class="ic"><use href="#bcube"/></svg><i class="caret ms-1"></i></button><button class="ms-2" aria-label="Snap view"><svg class="ic"><use href="#turn"/></svg></button></div>
        </div>
        <div class="col-b">
          <button class="rb"><svg class="ic"><use href="#spin"/></svg>Spin<i class="caret ms-2"></i></button>
          <button class="rb"><svg class="ic"><use href="#hand"/></svg>Pan</button>
          <button class="rb"><svg class="ic"><use href="#zoomi"/></svg>Zoom<i class="caret ms-2"></i></button>
        </div>
      </div><div class="glabel">Orient</div></section>

      <section class="grp" style="width:203px"><div class="gbody" style="padding-left:3px">
        <div class="cells">
          <button aria-label="Line"><svg class="ic"><use href="#k1"/></svg></button><button aria-label="Tangent line"><svg class="ic"><use href="#k6"/></svg></button><button aria-label="Construction line"><svg class="ic"><use href="#k11"/></svg></button>
          <button aria-label="Rectangle"><svg class="ic"><use href="#k2"/></svg></button><button aria-label="Three-point rectangle"><svg class="ic"><use href="#k7"/></svg></button><button aria-label="Ellipse"><svg class="ic"><use href="#k12"/></svg></button>
          <button aria-label="Circle"><svg class="ic"><use href="#k3"/></svg></button><button aria-label="Three-point circle"><svg class="ic"><use href="#k8"/></svg></button><button aria-label="Polygon"><svg class="ic"><use href="#k13"/></svg></button>
          <button aria-label="Tangent arc"><svg class="ic"><use href="#k4"/></svg></button><button aria-label="Three-point arc"><svg class="ic"><use href="#k9"/></svg></button><button aria-label="Sweep arc"><svg class="ic"><use href="#k14"/></svg></button>
          <button aria-label="Spline"><svg class="ic"><use href="#k5"/></svg></button><button aria-label="Point"><svg class="ic"><use href="#k10"/></svg></button><button aria-label="Face curve"><svg class="ic"><use href="#k15"/></svg></button>
        </div>
        <div class="cells trim">
          <button aria-label="Rounded corner"><svg class="ic"><use href="#t1"/></svg></button><button aria-label="Offset curve"><svg class="ic"><use href="#t2"/></svg></button><button aria-label="Project to sketch"><svg class="ic"><use href="#t3"/></svg></button>
          <button aria-label="Create corner"><svg class="ic"><use href="#t4"/></svg></button><button aria-label="Trim away"><svg class="ic"><use href="#t5"/></svg></button><button aria-label="Split curve"><svg class="ic"><use href="#t6"/></svg></button>
          <button aria-label="Bend"><svg class="ic"><use href="#t7"/></svg></button><button aria-label="Scale"><svg class="ic"><use href="#t8"/></svg></button>
        </div>
      </div><div class="glabel">Sketch</div></section>

      <section class="grp" style="width:34px"><div class="gbody justify-content-center">
        <div class="cells"><button aria-label="Sketch mode"><svg class="ic"><use href="#m1"/></svg></button><button aria-label="Section mode"><svg class="ic"><use href="#m2"/></svg></button><button class="hot" aria-label="3D mode"><svg class="ic"><use href="#gcube"/></svg></button></div>
      </div><div class="glabel">Mode</div></section>

      <section class="grp" style="width:204px"><div class="gbody ps-1">
        <button class="tile"><svg class="big"><use href="#ptr"/></svg>Select<i class="caret mt-1"></i></button>
        <button class="tile hot"><svg class="big"><use href="#pull"/></svg>Pull</button>
        <button class="tile" style="width:42px"><svg class="big"><use href="#move"/></svg>Move</button>
        <button class="tile"><svg class="big"><use href="#fill"/></svg>Fill</button>
        <div class="col-b justify-content-around ps-1"><button aria-label="Replace"><svg width="24" height="22"><use href="#rep"/></svg></button><button aria-label="Blend"><svg width="24" height="22"><use href="#blend"/></svg></button></div>
      </div><div class="glabel">Edit</div></section>

      <section class="grp" style="width:137px"><div class="gbody ps-1">
        <button class="tile" style="width:50px"><svg class="big"><use href="#combine"/></svg>Combine</button>
        <div class="col-b ps-2">
          <button class="rb"><svg class="ic"><use href="#s1"/></svg>Split Solid</button><button class="rb"><svg class="ic"><use href="#s2"/></svg>Split Face</button><button class="rb"><svg class="ic"><use href="#s3"/></svg>Project</button>
        </div>
      </div><div class="glabel">Intersect</div></section>

      <section class="grp" style="width:179px"><div class="gbody ps-1">
        <button class="tile"><svg class="big"><use href="#file"/></svg>File<i class="caret mt-1"></i></button>
        <div class="cells">
          <button aria-label="Plane"><svg class="ic"><use href="#i1"/></svg></button><button aria-label="Axis"><svg class="ic"><use href="#i2"/></svg></button><button aria-label="Origin"><svg class="ic"><use href="#i3"/></svg></button>
          <button aria-label="Cylinder"><svg class="ic"><use href="#i4"/></svg></button><button aria-label="Sphere"><svg class="ic"><use href="#i5"/></svg></button><button aria-label="Standard hole"><svg class="ic"><use href="#i6"/></svg></button>
          <button aria-label="Linear pattern"><svg class="ic"><use href="#i7"/></svg></button><button aria-label="Circular pattern"><svg class="ic"><use href="#i8"/></svg></button><button aria-label="Fill pattern"><svg class="ic"><use href="#i9"/></svg></button>
        </div>
        <div class="col-b ps-1">
          <button class="rb"><svg class="ic"><use href="#shell"/></svg>Shell</button><button class="rb"><svg class="ic"><use href="#offs"/></svg>Offset</button><button class="rb"><svg class="ic"><use href="#mirr"/></svg>Mirror</button>
        </div>
      </div><div class="glabel">Insert</div></section>

      <section class="grp" style="width:135px"><div class="gbody ps-2">
        <div class="col-b" style="width:66px"><button class="rb"><svg class="ic"><use href="#a1"/></svg>Tangent</button><button class="rb"><svg class="ic"><use href="#a2"/></svg>Align</button><button class="rb"><svg class="ic"><use href="#a3"/></svg>Orient</button></div>
        <div class="col-b off"><button class="rb"><svg class="ic"><use href="#a4"/></svg>Rigid</button><button class="rb"><svg class="ic"><use href="#a5"/></svg>Gear</button><button class="rb"><svg class="ic"><use href="#a6"/></svg>Anchor</button></div>
      </div><div class="glabel">Assembly</div></section>
    </div>

    <div class="d-flex flex-grow-1" style="min-height:0">
      <aside class="side d-flex flex-column flex-shrink-0">
        <div class="phead d-flex align-items-center justify-content-between">Structure<svg width="10" height="12"><use href="#pin"/></svg></div>
        <div class="pbox flex-shrink-0" style="height:133px;color:#000">
          <div class="d-flex align-items-center ps-2" style="height:16px;margin-top:1px">
            <svg width="9" height="9"><path d="M.5 .5h8v8h-8z" fill="#fff" stroke="#8a8f96"/><path d="M2 4.500h5" stroke="#222"/></svg>
            <input class="form-check-input ms-2" type="checkbox" id="cd" checked>
            <svg class="ic ms-1"><use href="#doc"/></svg><label for="cd" class="fw-bold" style="padding-left:2px">Design1*</label>
          </div>
          <div class="d-flex align-items-center" style="height:16px;padding-left:43px">
            <input class="form-check-input" type="checkbox" id="cs" checked>
            <svg width="15" height="15" class="ms-1 me-1"><use href="#gcube"/></svg><label for="cs" style="background:#fae277;padding:0 1px 1px">Solid</label>
          </div>
        </div>
        <div class="tabs d-flex align-items-start" style="height:28px"><button class="active">Structure</button><button>Layers</button><button>Selection</button><button>Groups</button><button>Views</button></div>
        <div class="phead d-flex align-items-center justify-content-between">Options - Pull<svg width="10" height="12"><use href="#pin"/></svg></div>
        <div class="opts d-flex flex-shrink-0">
          <div class="obody flex-grow-1">
            <div class="ohead d-flex align-items-center"><svg class="ic"><use href="#pullb"/></svg><b class="flex-grow-1" style="color:#333a46;padding-left:6px">Pull Options</b><button aria-label="Collapse"><svg width="16" height="16"><circle cx="8" cy="8" r="7.500" fill="#586192"/><path d="M5 8l3-3 3 3M5 12l3-3 3 3" fill="none" stroke="#fff" stroke-width="1.300"/></svg></button></div>
            <div class="d-flex"><button class="rb"><svg class="ic"><use href="#plus"/></svg>Add</button><button class="rb" style="padding-left:8px"><svg class="ic"><use href="#minus"/></svg>Cut</button><button class="rb" style="padding-left:8px"><svg class="ic"><use href="#nom"/></svg>No merge</button></div>
            <div class="d-flex off"><button class="rb" aria-label="Both sides"><svg class="ic"><use href="#flat"/></svg></button><button class="rb" style="padding-left:8px"><svg class="ic"><use href="#full"/></svg>Full Pull</button></div>
            <div class="d-flex"><button class="rb"><svg class="ic"><use href="#meas"/></svg>Measure</button><button class="rb" style="padding-left:8px"><svg class="ic"><use href="#rule"/></svg>Ruler</button></div>
            <div class="rb off" style="height:20px"><input class="form-check-input opacity-50" type="checkbox" id="mo"><label for="mo">Maintain offset</label></div>
            <div class="rb" style="height:16px"><input class="form-check-input" type="checkbox" id="ts" checked><label for="ts">Thicken surface</label></div>
          </div>
          <div class="sbar d-flex flex-column align-items-center py-2"><i class="caret up mb-2"></i><div class="thumb w-100" style="height:29px"><i class="gripv"></i></div><i class="caret mt-auto"></i></div>
        </div>
        <div class="phead d-flex align-items-center justify-content-between" style="margin-top:7px">Properties<svg width="10" height="12"><use href="#pin"/></svg></div>
        <div class="pbox flex-grow-1"></div>
        <div class="tabs d-flex align-items-start" style="height:26px"><button class="active px-1">Properties</button><button>Appearance</button></div>
      </aside>

      <main class="d-flex flex-column flex-grow-1 pe-1" style="min-width:0;padding-top:3px">
        <div class="view d-flex flex-column flex-grow-1">
          <div class="d-flex flex-grow-1" style="min-height:0">
            <div class="position-relative flex-grow-1 overflow-hidden">
              <svg class="w-100 h-100" viewBox="241 155 1010 484" preserveAspectRatio="xMinYMin slice" role="img" aria-label="Solid plate with an elliptical hole">
                <defs>
                  <pattern id="mesh" width="2" height="2" patternUnits="userSpaceOnUse"><rect width="2" height="2" fill="#3c8a44"/><rect width="1" height="1" fill="#b8eab8"/></pattern>
                  <linearGradient id="hole"><stop offset="0" stop-color="#829f85"/><stop offset=".2" stop-color="#9cc19e"/><stop offset=".45" stop-color="#b5e0b5"/><stop offset=".75" stop-color="#b2dcb3"/><stop offset=".9" stop-color="#9fc4a1"/><stop offset="1" stop-color="#83a888"/></linearGradient>
                  <linearGradient id="front"><stop offset="0" stop-color="#a1c4a0"/><stop offset=".85" stop-color="#9fc49f"/><stop offset="1" stop-color="#a9d0a8"/></linearGradient>
                </defs>
                <path d="M402 192L361 269L549 524L925 639L1000 662L1085 660L590 447z" fill="#9bbe9b" stroke="#1c2a1e"/>
                <path d="M590 447L1078 595Q1096 604 1094 622Q1093 638 1085 655L1000 662L549 524z" fill="url(#front)" stroke="#1f3b23"/>
                <path d="M550 524L590 447" stroke="#2c5c33"/>
                <path d="M886 339Q893 340 898 347L1082 592L1084 598L1072 594z" fill="#7d8b7e" stroke="#25402a"/>
                <path d="M402 192L886 339Q890 341 893 346L1073 594L590 447z" fill="url(#mesh)" stroke="#157026" stroke-width="1.500"/>
                <ellipse cx="602" cy="356" rx="74" ry="22" transform="rotate(29 602 356)" fill="url(#hole)" stroke="#157026" stroke-width="1.500"/>
                <path d="M1050 632l6 7M1025 597h2" stroke="#5a855c"/>
                <path d="M736 394l5-13 11-14-3 12-9 15z" fill="#d9b521" stroke="#8c7714" stroke-width=".7"/>
                <path d="M846 280l14 14h-6v14h-16v-14h-6z" fill="#e4eef2" opacity=".75"/>
                <path d="M845 378l-17-10q1-20 9-24h14q11 4 10 22z" fill="#87c9b4" opacity=".3"/>
                <path d="M848 332l5 5" stroke="#000" stroke-width="2"/><circle cx="845" cy="328" r="5.500" fill="#fff" stroke="#000"/><path d="M842 326h6M842 329h6M845 327v5M852 323l3-2 3 2M839 335l3 2 3-2" fill="none" stroke="#000"/>
              </svg>
              <div class="prompt position-absolute">Copy 1 Face</div>
              <div class="hint position-absolute">Hold CTRL key and Middle Mouse Button, and move the mouse toward/away from you to ZOOM</div>
              <div class="tools position-absolute">
                <button class="pick" aria-label="Select"><svg viewBox="0 0 32 32" style="width:38px;height:38px"><path d="M8 3v21l5-4 4 9 5-2-4-9h7z" fill="#7b6146" stroke="#f3a24a" stroke-width="2.500"/><path d="M8 3v21l5-4 4 9 5-2-4-9h7z" fill="#7b6146" stroke="#4b3928"/></svg></button>
                <button aria-label="Pull direction"><svg><use href="#g1"/></svg></button><button aria-label="Revolve"><svg><use href="#g2"/></svg></button>
                <button aria-label="Draft"><svg><use href="#g3"/></svg></button><button aria-label="Sweep"><svg><use href="#g4"/></svg></button>
                <span></span><button aria-label="Scale body"><svg><use href="#g5"/></svg></button>
                <span></span><button aria-label="Up to" class="opacity-25" style="margin-top:23px"><svg><use href="#g6"/></svg></button>
              </div>
            </div>
            <div class="sbar d-flex flex-column align-items-center pt-2"><i class="caret up mb-2"></i><div class="thumb w-100" style="flex:0 1 403px"><i class="gripv"></i></div><i class="caret mt-auto mb-2"></i><div class="thumb w-100" style="height:5px"></div></div>
          </div>
          <div class="d-flex align-items-center justify-content-between flex-shrink-0" style="height:17px;background:#efefef">
            <div class="d-flex align-items-center gap-2 ps-1"><div class="thumb" style="width:5px;height:15px"></div><svg width="4" height="7"><path d="M4 0v7L0 3.500z" fill="#555"/></svg></div>
            <div class="d-flex align-items-start gap-3 pe-1"><svg width="4" height="7" class="mt-1"><path d="M0 0v7l4-3.500z" fill="#555"/></svg><svg width="7" height="12"><path d="M0 2h7v7H0z" fill="#f4b35c"/></svg></div>
          </div>
        </div>
        <div class="doctabs d-flex justify-content-between flex-shrink-0 me-n1" style="margin-top:4px">
          <div class="doctab position-relative d-flex align-items-center">
            <svg class="position-absolute top-0 start-0" width="100" height="23"><path d="M.5 0v19q1 3 4 3h76q6 0 9-6l7-11q2-4 6-5" fill="#f0f2f5" stroke="#8d929b"/></svg>
            <svg class="ic position-relative ms-1"><use href="#part"/></svg><span class="position-relative" style="margin-left:1px">Design1*</span>
            <button class="position-relative ms-1" aria-label="Close document"><svg width="8" height="8"><path d="M1 1l6 6M7 1L1 7" stroke="#555" stroke-width="1.500"/></svg></button>
          </div>
          <div class="d-flex align-items-center gap-2 pb-1"><button aria-label="Previous"><svg width="6" height="9"><path d="M5 1v7L1 4.500z" fill="none" stroke="#333"/></svg></button><button aria-label="Next"><svg width="6" height="9"><path d="M1 1v7l4-3.500z" fill="none" stroke="#333"/></svg></button><button aria-label="Close"><svg width="8" height="8"><path d="M1 1l6 6M7 1L1 7" stroke="#333" stroke-width="1.500"/></svg></button></div>
        </div>
      </main>
    </div>

    <footer class="status d-flex align-items-center flex-shrink-0 ps-1">
      <div class="flex-grow-1">Copy 1 Face</div>
      <i class="sep"></i><div class="d-flex align-items-center" style="width:140px;padding-left:3px">Face<i class="ms-auto border-start border-secondary" style="height:15px;margin-right:98px"></i></div>
      <button style="width:14px" aria-label="Step"><svg width="10" height="18"><path d="M1 7l4-5 4 5zM1 11l4 5 4-5z" fill="#e8eaed" stroke="#8b9098"/></svg></button>
      <button style="width:26px" aria-label="Selection mode"><svg class="ic"><use href="#sel"/></svg></button>
      <button class="gap-1" style="width:38px" aria-label="Cursor"><svg width="18" height="18"><use href="#cur"/></svg><i class="caret up ms-1"></i></button>
      <i class="sep"></i>
      <button style="width:48px;color:#8c9198"><svg class="ic"><use href="#stop"/></svg>&nbsp;Stop</button>
      <button class="gap-2" style="width:42px" aria-label="Warnings"><svg width="15" height="16"><use href="#warn"/></svg><i class="caret up opacity-50"></i></button>
      <i class="sep"></i>
      <button class="gap-2" style="width:44px" aria-label="View style"><svg width="18" height="18"><use href="#vw"/></svg><i class="caret up"></i></button>
      <div class="wgrp">
        <button class="gap-2" style="width:36px" aria-label="Spin"><svg class="ic"><use href="#spin"/></svg><i class="caret up"></i></button>
        <button class="border-start" style="width:23px" aria-label="Pan"><svg class="ic"><use href="#hand"/></svg></button>
        <button class="border-start gap-1" style="width:34px" aria-label="Zoom"><svg class="ic"><use href="#zoomi"/></svg><i class="caret up ms-1"></i></button>
      </div>
      <div class="wgrp ms-1">
        <button style="width:23px" aria-label="Previous view"><svg class="ic"><use href="#ar1"/></svg></button><button class="border-start" style="width:23px" aria-label="Next view"><svg class="ic"><use href="#ar2"/></svg></button>
      </div>
      <svg width="12" height="12" style="margin:10px 0 0 5px"><path d="M10 0h2v2h-2zM6 4h2v2H6zM10 4h2v2h-2zM2 8h2v2H2zM6 8h2v2H6zM10 8h2v2h-2z" fill="#6e7687"/></svg>
    </footer>
  </div>
</div>
</body>
</html>
